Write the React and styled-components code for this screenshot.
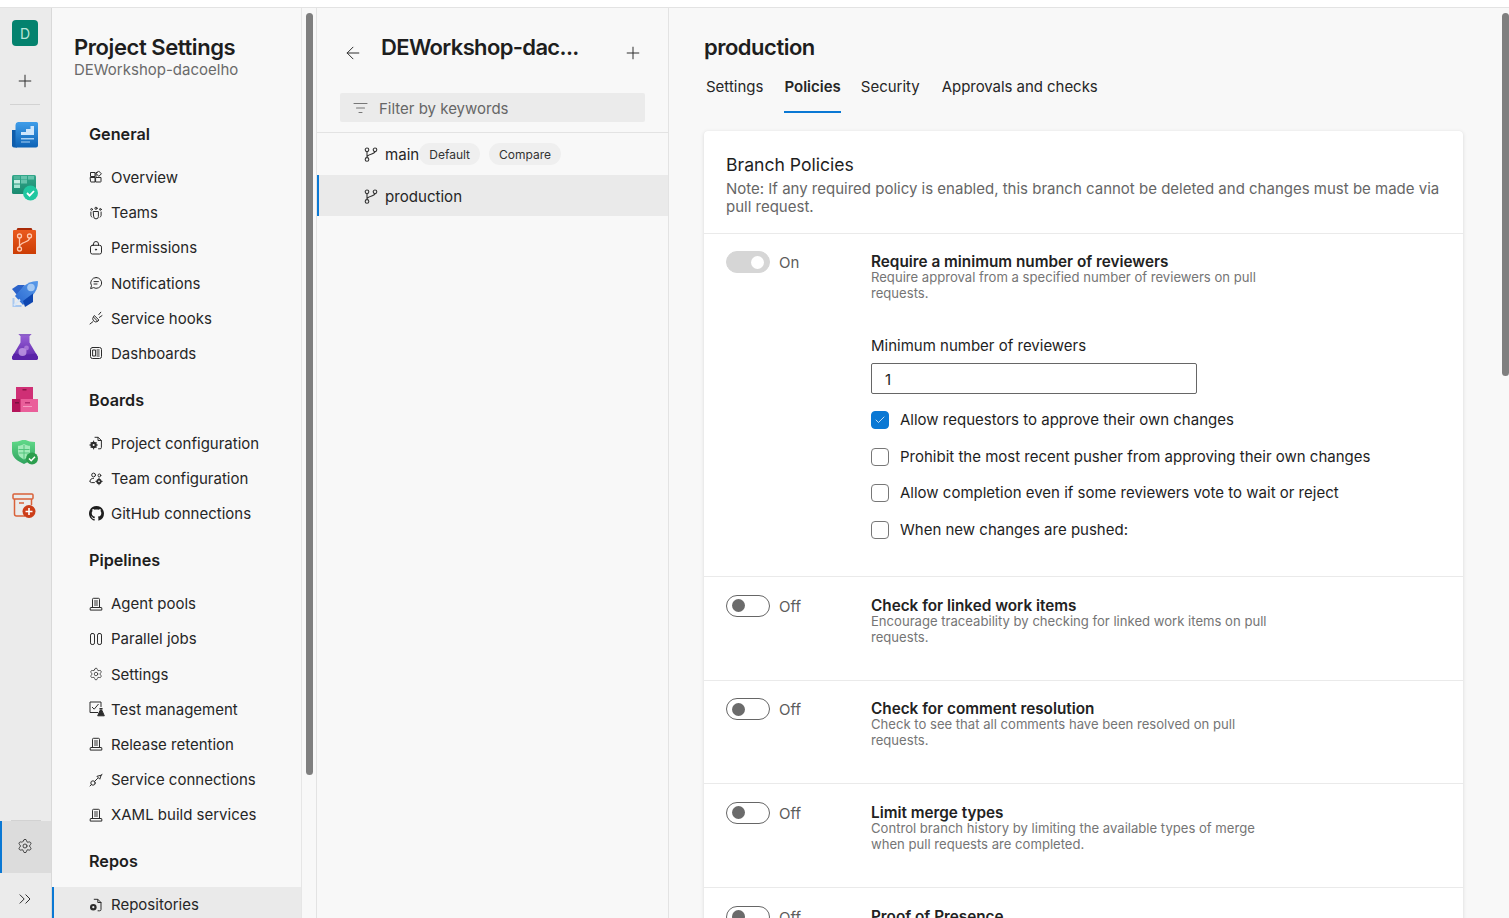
import React from "react";
import styled, { createGlobalStyle } from "styled-components";
import { Settings as Gear, Plus, ArrowLeft, ChevronsRight, Check } from "lucide-react";

const Global = createGlobalStyle`
  html, body { margin: 0; padding: 0; height: 100%; overflow: hidden; background: #fff; }
  body { font-family: Inter, "Noto Sans", "Liberation Sans", sans-serif; color: #1e1e1e; }
  * { box-sizing: border-box; }
`;

const Page = styled.div`display: flex; flex-direction: column; height: 918px; overflow: hidden;`;
const TopStrip = styled.div`height: 8px; flex: none; background: #fff; border-bottom: 1px solid #e3e3e3;`;
const Body = styled.div`display: flex; flex: 1; min-height: 0; background: #f8f8f8;`;

const Rail = styled.nav`
  width: 52px; flex: none; background: #ebebeb; border-right: 1px solid #d9d9d9;
  display: flex; flex-direction: column; align-items: center; padding: 12px 1px 0 0;
`;
const ProjectBadge = styled.div`
  width: 26px; height: 26px; border-radius: 4px; background: #04826e; color: #b9e6da;
  display: flex; align-items: center; justify-content: center; font-size: 14px; flex: none;
`;
const RailButton = styled.div`
  height: 24px; flex: none; margin-top: 23px; display: flex; align-items: center; color: #2f2f2f;
`;
const RailDivider = styled.div`width: 30px; height: 1px; background: #d2d2d2; margin-top: 11px; flex: none;`;
const RailList = styled.div`margin-top: 3px; display: flex; flex-direction: column; align-items: center; width: 100%;`;
const RailItem = styled.div`height: 53px; width: 100%; display: flex; align-items: center; justify-content: center;`;
const RailFooter = styled.div`margin: auto -1px 0 0; width: calc(100% + 1px); display: flex; flex-direction: column;`;
const RailSettings = styled.div`
  height: 52px; background: #dcdcdc; border-left: 2px solid #0a78d4;
  display: flex; align-items: center; justify-content: center; padding: 0 3px 2px 0; color: #2f2f2f;
`;
const RailCollapse = styled.div`height: 45px; display: flex; align-items: center; justify-content: center; color: #2f2f2f; padding: 6px 1px 0 0;`;
const FooterLine = styled.div`width: 30px; height: 1px; background: #d2d2d2; margin: 0 auto;`;

const NavWrap = styled.div`position: relative; width: 265px; flex: none; border-right: 1px solid #e3e3e3;`;
const Nav = styled.aside`width: 250px; height: 100%; border-right: 1px solid #e6e6e6; overflow: hidden; padding-top: 25px;`;
const NavHeader = styled.header`padding-left: 22px;`;
const NavTitle = styled.h1`margin: 0; font-size: 22px; line-height: 28px; font-weight: 600; letter-spacing: -0.42px;`;
const NavSub = styled.div`font-size: 15px; line-height: 20px; color: #6a6a6a; margin-top: -1px;`;
const NavBody = styled.div`margin-top: 42px;`;
const NavGroup = styled.h2`
  margin: 0 0 13.9px 37px; font-size: 16.2px; line-height: 24px; font-weight: 600;
`;
const NavGroupBlock = styled.section`margin-bottom: 16.9px;`;
const NavRow = styled.div`
  height: 35.2px; display: flex; align-items: center; font-size: 15px;
  padding-left: ${p => (p.$active ? 35 : 37)}px; color: #262626;
  ${p => p.$active && "background:#eaeaea;border-left:2px solid #0a78d4;"}
`;
const NavIconBox = styled.span`width: 22px; flex: none; display: flex; align-items: center; color: #2c2c2c;`;
const Thumb = styled.div`
  position: absolute; top: ${p => p.$top}px; right: ${p => p.$right}px; width: 7px; height: ${p => p.$h}px;
  background: #7f7f7f; border-radius: 4px;
`;

const Mid = styled.section`width: 352px; flex: none; border-right: 1px solid #e3e3e3; background: #f8f8f8;`;
const MidHeader = styled.header`height: 85px; display: flex; align-items: flex-start; padding: 25px 25px 0 26px; color: #2f2f2f;`;
const BackButton = styled.span`margin-top: 10px; display: flex;`;
const MidTitle = styled.h2`
  margin: 0 0 0 18px; flex: 1; font-size: 22px; line-height: 28px; font-weight: 600; letter-spacing: -0.65px; color: #1e1e1e;
`;
const AddButton = styled.span`margin-top: 10px; display: flex;`;
const FilterBox = styled.div`
  margin: 0 23px; height: 29px; background: #ebebeb; border-radius: 2px; display: flex; align-items: center;
  padding: 1px 0 0 13px; gap: 11px; font-size: 15px; color: #666;
`;
const MidDivider = styled.div`height: 1px; background: #e3e3e3; margin-top: 10px;`;
const BranchRow = styled.div`
  height: ${p => p.$h}px; display: flex; align-items: center; padding-left: ${p => (p.$active ? 45 : 47)}px;
  font-size: 15.1px; color: #262626;
  ${p => p.$active && "background:#eaeaea;border-left:2px solid #0a78d4;padding-top:1px;"}
`;
const BranchName = styled.span`margin-left: 7px;`;
const Pill = styled.span`
  height: 22px; padding: 0 10px; border-radius: 11px; background: #efefef; font-size: 12px;
  display: inline-flex; align-items: center; margin-left: ${p => p.$gap}px; color: #333;
`;

const Main = styled.main`position: relative; flex: 1; min-width: 0; padding: 25px 0 0 35px; overflow: hidden;`;
const MainTitle = styled.h2`margin: 0; font-size: 22px; line-height: 28px; font-weight: 600; letter-spacing: -0.5px;`;
const Tabs = styled.div`display: flex; margin: 9px 0 18px 2px; gap: 20px; height: 43px;`;
const Tab = styled.div`
  font-size: 15px; line-height: 20px; padding-top: 7px; height: 43px; color: #262626;
  margin-left: ${p => p.$ml || 0}px; letter-spacing: ${p => p.$ls || 0}px;
  ${p => p.$active && "font-weight:600;border-bottom:2px solid #0a78d4;"}
`;
const Card = styled.div`
  width: 759px; background: #fff; border-radius: 4px 4px 0 0;
  box-shadow: 0 1px 4px rgba(0,0,0,.12), 0 0 1px rgba(0,0,0,.06);
`;
const CardHeader = styled.div`padding: 22px 22px 17px; border-bottom: 1px solid #eaeaea;`;
const CardTitle = styled.h3`margin: 0; font-size: 17.6px; line-height: 24px; font-weight: 400;`;
const CardNote = styled.p`margin: 3px 0 0; font-size: 15px; line-height: 18px; color: #666;`;
const Policy = styled.div`
  display: grid; grid-template-columns: 145px 1fr; padding: ${p => p.$pt}px 22px ${p => p.$pb}px;
  border-bottom: 1px solid #eaeaea;
`;
const ToggleCell = styled.div`display: flex; align-items: flex-start; gap: 9px; font-size: 15px; color: #5c5c5c; line-height: 22px;`;
const ToggleLabel = styled.span`padding-top: 1px;`;
const ToggleTrack = styled.span`
  width: 44px; height: 22px; border-radius: 11px; flex: none; display: flex; align-items: center; padding: 0 5px;
  justify-content: ${p => (p.$on ? "flex-end" : "flex-start")};
  background: ${p => (p.$on ? "#d6d6d6" : "#fff")};
  border: 1px solid ${p => (p.$on ? "#d6d6d6" : "#666")};
`;
const ToggleKnob = styled.span`width: 13px; height: 13px; border-radius: 50%; background: ${p => (p.$on ? "#fff" : "#6b6b6b")};`;
const PolicyTitle = styled.div`font-size: 15.3px; line-height: 20px; font-weight: 600; color: #222; padding-top: 1px;`;
const PolicyDesc = styled.div`font-size: 13.1px; line-height: 16px; color: #757575; width: 400px; margin-top: -3px;`;
const FieldLabel = styled.div`margin-top: 35px; font-size: 15px; line-height: 20px;`;
const NumberBox = styled.div`
  margin-top: 7px; width: 326px; height: 31px; border: 1px solid #666; border-radius: 2px;
  font-size: 15px; display: flex; align-items: center; padding: 1px 0 0 13px;
`;
const Checks = styled.div`margin-top: 17px; display: flex; flex-direction: column; gap: 18.6px;`;
const CheckRow = styled.div`display: flex; align-items: center; gap: 11px; font-size: 15px; height: 18px;`;
const CheckLabel = styled.span`margin-top: -1px;`;
const CheckBox = styled.span`
  width: 18px; height: 18px; border-radius: 4px; flex: none; display: flex; align-items: center; justify-content: center;
  border: 1px solid ${p => (p.$on ? "#0a78d4" : "#777")}; background: ${p => (p.$on ? "#0a78d4" : "#fff")}; color: #fff;
`;

const S = { fill: "none", stroke: "currentColor", strokeWidth: 1, strokeLinecap: "round", strokeLinejoin: "round" };
const I = ({ children, w = 14, h = 14 }) => <svg width={w} height={h} viewBox={`0 0 ${w} ${h}`} {...S}>{children}</svg>;

const icons = {
  overview: <I><path d="M2 2.5h4v4H1.5v-3.5a.5.5 0 0 1 .5-.5zM1.5 7.5H6v4.5H2a.5.5 0 0 1-.5-.5zM7 7.5h5v4a.5.5 0 0 1-.5.5H7zM7 6.5V2.5h1.2M9.8 1.2l2.6 2.6-2.6 2.6-2.4-2.6z" /></I>,
  teams: <I><circle cx="7" cy="2.3" r="1.1"/><circle cx="2.6" cy="3.4" r=".9"/><circle cx="11.4" cy="3.4" r=".9"/><path d="M4.6 5.500h4.800v5a2.400 2.400 0 0 1-4.800 0zM1.900 6v3.600a2 2 0 0 0 1 1.500M12.100 6v3.600a2 2 0 0 1-1 1.500"/></I>,
  lock: <I><rect x="1.500" y="4.300" width="11" height="8.700" rx="1.800"/><path d="M4.500 4.300V3a2.500 2.500 0 0 1 5 0v1.300"/><circle cx="7" cy="8.600" r=".6" fill="currentColor"/></I>,
  chat: <I><path d="M7.200 1.500a5.400 5.400 0 1 1-2.600 10.100L1.600 12.600l.9-2.900A5.400 5.400 0 0 1 7.200 1.500zM5 5.600h4.400M5 8h3"/></I>,
  hook: <I><path d="M1 13l3-2.400M11.800 1.200L9.800 3.600M4.600 6.200l4 4M5.600 4.800l4.400 4.400-1.600 1.200a2.400 2.400 0 0 1-3.200-.2l-1-1a2.400 2.400 0 0 1 0-3zM13 4.600l-2.600 1.800"/></I>,
  dash: <I><rect x="1.500" y="1.500" width="11" height="11" rx="2"/><path d="M4 4h2.600v6H4zM8 4h2.200M8 6h2.200M8 8h2.200M8 10h2.200"/></I>,
  projcfg: <I><path d="M6 1.300h3.200L12.400 4.500v7a1.300 1.300 0 0 1-1.300 1.300H9.500M9 1.500v3h3.200"/><circle cx="4.600" cy="9" r="3.200" fill="currentColor" stroke="none"/><path d="M4.600 5v1M4.600 12v1M.8 9h1M7.400 9h1M2 6.400l.7.7M6.500 10.900l.7.7M2 11.600l.7-.7M6.500 7.100l.7-.7"/><circle cx="4.600" cy="9" r="1" fill="#f8f8f8" stroke="none"/></I>,
  teamcfg: <I><circle cx="4.600" cy="3" r="1.900"/><path d="M1 9.300c0-2 1.500-3 3.600-3M1 9.300c0 .8.6 1.300 1.400 1.300h3"/><circle cx="10.400" cy="3.400" r="1.400"/><circle cx="10" cy="9.400" r="2.600" fill="currentColor" stroke="none"/><path d="M10 6v.8M10 12v.8M6.800 9.400h.8M12.400 9.400h.8"/><circle cx="10" cy="9.400" r=".8" fill="#f8f8f8" stroke="none"/></I>,
  github: <svg width="15" height="15" viewBox="0 0 16 16" fill="#1e1e1e"><path d="M8 0C3.58 0 0 3.58 0 8c0 3.54 2.29 6.53 5.47 7.59.4.07.55-.17.55-.38 0-.19-.01-.82-.01-1.490-2.010.37-2.530-.49-2.690-.94-.09-.23-.48-.94-.82-1.130-.28-.15-.68-.52-.01-.53.63-.01 1.080.58 1.230.82.72 1.210 1.870.87 2.330.66.07-.52.28-.87.51-1.070-1.780-.2-3.640-.89-3.640-3.950 0-.87.31-1.590.82-2.150-.08-.2-.36-1.020.08-2.120 0 0 .67-.21 2.200.82.64-.18 1.320-.27 2-.27s1.360.09 2 .27c1.530-1.040 2.200-.82 2.200-.82.44 1.100.16 1.920.08 2.120.51.56.82 1.270.82 2.150 0 3.070-1.870 3.750-3.650 3.950.29.25.54.73.54 1.480 0 1.070-.01 1.930-.01 2.200 0 .21.15.46.55.38A8.010 8.010 0 0 0 16 8c0-4.420-3.580-8-8-8z"/></svg>,
  agent: <I><path d="M3.500 10.500V2.300a1 1 0 0 1 1-1h5a1 1 0 0 1 1 1v8.200M1.200 12.700V11a.5.5 0 0 1 .5-.5h10.600a.5.5 0 0 1 .5.5v1.700zM5.500 4h3M5.500 6h3M5.500 8h3"/></I>,
  parallel: <I><rect x="1.500" y="1.500" width="4" height="11" rx="1.600"/><rect x="8.500" y="1.500" width="4" height="11" rx="1.600"/></I>,
  gear: <Gear size={14} strokeWidth={1.3} />,
  test: <svg width="16" height="16" viewBox="0 0 16 16" fill="none" stroke="currentColor" strokeWidth="1"><path d="M9 11.500H1V1h11v5"/><path d="M3 6l2.200 2.200L9.500 3"/><path d="M10.500 7.500h3M11.200 7.500v2M12.800 7.500v2" /><path d="M11 9.500h2l2.300 5.300H8.700z" fill="currentColor"/></svg>,
  conn: <I><circle cx="4" cy="10" r="2.200"/><path d="M1 13l1.500-1.500M5.600 8.400l3-3M8.200 3.600l2.600 2.600 1.200-3.600zM13 1.200l-1 1.400"/></I>,
  repo: <I><path d="M5.200 1.300h3.600L12 4.500v7a1.300 1.300 0 0 1-1.300 1.300H9M8.800 1.500v3h3.100"/><circle cx="4.300" cy="9.200" r="3.300" fill="currentColor" stroke="none"/><circle cx="4.300" cy="9.200" r="1.100" fill="#eaeaea" stroke="none"/></I>,
};

const BranchIcon = () => (
  <svg width="14" height="15" viewBox="0 0 14 15" fill="none" stroke="#333" strokeWidth="1.100">
    <circle cx="3" cy="2.800" r="1.800"/><circle cx="11" cy="2.800" r="1.800"/><circle cx="3" cy="12.400" r="1.800"/>
    <path d="M3 4.600v6M11 4.600c0 3-8 2.400-8 5.600"/>
  </svg>
);
const FilterIcon = () => (
  <svg width="15" height="13" viewBox="0 0 15 13" fill="none" stroke="#777" strokeWidth="1.100" strokeLinecap="round">
    <path d="M1 1.500h13M3.500 6h8M6 10.500h3"/>
  </svg>
);

const RailIcon = ({ children, dy = 0 }) => <svg width="26" height="26" viewBox={`0 ${dy} 26 26`}>{children}</svg>;
const OverviewIcon = () => (
  <RailIcon><defs><linearGradient id="ov" x1="0" y1="0" x2="0" y2="1"><stop offset="0" stopColor="#3f9de9"/><stop offset="1" stopColor="#0d62b5"/></linearGradient></defs>
    <path d="M0 8h5v17.500H2a2 2 0 0 1-2-2z" fill="#0f5dab"/>
    <path d="M6 0h18.500a1.500 1.500 0 0 1 1.500 1.500v22a2 2 0 0 1-2 2H3.500V3A3 3 0 0 1 6 0z" fill="url(#ov)"/>
    <path d="M9 13V10h5V7h4.500V4H22v9z" fill="#cfe6fb"/><path d="M9 16h13v1.500H9zM9 19.500h9v1H9z" fill="#a8d0f3"/></RailIcon>
);
const BoardsIcon = () => (
  <RailIcon><defs><linearGradient id="bo" x1="0" y1="0" x2="0" y2="1"><stop offset="0" stopColor="#33a78a"/><stop offset="1" stopColor="#1a8a70"/></linearGradient></defs>
    <rect y="0" width="24" height="19" rx="1.500" fill="url(#bo)"/>
    <g fill="#66c3ac"><rect x="2" y="1" width="6" height="3.500" fill="#4fb59b"/><rect x="9" y="1" width="6" height="3.500"/><rect x="16" y="1" width="6" height="3.500"/><rect x="9" y="5" width="6" height="3.500"/></g>
    <rect x="2" y="5" width="6" height="3.500" fill="#c9eee4"/><rect x="2" y="9.500" width="6" height="3.500" fill="#a7e3d3"/>
    <circle cx="18.500" cy="18" r="7.500" fill="#20c7a0"/><path d="M15 18l2.600 2.600 4.400-4.600" stroke="#fff" strokeWidth="1.800" fill="none"/></RailIcon>
);
const ReposIcon = () => (
  <RailIcon><defs><linearGradient id="re" x1="0" y1="0" x2="0" y2="1"><stop offset="0" stopColor="#ea5a1e"/><stop offset="1" stopColor="#cc3d05"/></linearGradient></defs>
    <path d="M4 3l1.500-3h14l1.500 3z" fill="#a92a07"/><path d="M2 2h21a1 1 0 0 1 1 1v23H1V3a1 1 0 0 1 1-1z" fill="url(#re)"/>
    <g fill="none" stroke="#ffc9af" strokeWidth="1.300"><circle cx="7.500" cy="8" r="2"/><circle cx="17.500" cy="8" r="2"/><circle cx="7.500" cy="21" r="2"/><path d="M7.500 10v9M17.500 10c0 5-10 3.500-10 9"/></g></RailIcon>
);
const PipesIcon = () => (
  <RailIcon><defs><linearGradient id="pi" x1="0" y1="1" x2="1" y2="0"><stop offset="0" stopColor="#2866d0"/><stop offset="1" stopColor="#5a9cea"/></linearGradient></defs>
    <path d="M0 8L6 4H13L5 14z" fill="#2b62c9"/>
    <path d="M11 6C15 2 20 0 25 0c.7 0 1 .3 1 1 0 5-2 10-6 14L11 24 3 15z" fill="url(#pi)"/>
    <path d="M21 12.500V21L13 26 11 20z" fill="#0f46b0"/>
    <circle cx="19" cy="6.500" r="3.800" fill="#a3c8f3"/>
    <path d="M1.500 17V25H9.500" fill="none" stroke="#a8c8f0" strokeWidth="2"/><path d="M2 24.500L8 18.500" stroke="#d8e7f9" strokeWidth="2"/></RailIcon>
);
const TestIcon = () => (
  <RailIcon><defs><linearGradient id="te" x1="0" y1="0" x2="0" y2="1"><stop offset="0" stopColor="#9a62d8"/><stop offset="1" stopColor="#5a23a8"/></linearGradient></defs>
    <path d="M6.500 0h13l-2 2v6.500L26 23a2.500 2.500 0 0 1-2 3H2A2.500 2.500 0 0 1 0 23l8.500-14.500V2z" fill="url(#te)"/>
    <path d="M6.500 0h13l-2 2h-9z" fill="#8c5fc7"/>
    <path d="M0 23l2-3.500c7 1.500 15 1.500 22 0l2 3.500a2.500 2.500 0 0 1-2 3H2A2.500 2.500 0 0 1 0 23z" fill="#5a23a8"/>
    <circle cx="10.500" cy="18" r="4" fill="#c9a6ea" opacity=".75"/><circle cx="14.500" cy="14" r="2.400" fill="#b98ae0" opacity=".7"/></RailIcon>
);
const ArtifactsIcon = () => (
  <RailIcon dy={1}>
    <rect x="4" y="0" width="17" height="14" fill="#c8266b"/><rect x="4" y="0" width="17" height="13" rx="1" fill="#cf2f75"/><rect x="10.500" y="3" width="4" height="1.500" fill="#8e1547"/>
    <rect x="0" y="13" width="9" height="13" fill="#b5155a"/><rect x="3" y="16" width="4" height="1.500" fill="#7c0f3e"/>
    <rect x="8.500" y="13" width="17.500" height="13" fill="#ea5f9a"/><rect x="13" y="16" width="5" height="1.500" fill="#b42d6c"/><rect x="11" y="20" width="9" height="1" fill="#f59cc2"/></RailIcon>
);
const ShieldIcon = () => (
  <RailIcon dy={1}><defs><linearGradient id="sh" x1="0" y1="0" x2="0" y2="1"><stop offset="0" stopColor="#63dc8b"/><stop offset="1" stopColor="#2fa35e"/></linearGradient></defs>
    <path d="M12 0c3 2 6 3 11 3v9c0 6-4 10-11 13C5 22 0 18 0 12V3c5 0 9-1 12-3z" fill="url(#sh)"/>
    <path d="M12 5c2 1.200 4 1.800 6 1.800V13c0 3.500-2.500 5.800-6 7.500-3.500-1.700-6-4-6-7.500V6.800C8 6.800 10 6.200 12 5z" fill="#a2eab9"/>
    <path d="M6.500 10.500h11M6.500 14h11M12 6v14" stroke="#52c47c" strokeWidth="1"/>
    <circle cx="20" cy="19.500" r="6" fill="#2c9e4e"/><path d="M17 19.500l2.200 2.200 3.800-4" stroke="#fff" strokeWidth="1.500" fill="none"/></RailIcon>
);
const BoxPlusIcon = () => (
  <RailIcon>
    <g fill="none" stroke="#d9623a" strokeWidth="1.500"><rect x="1" y="1" width="20" height="5" rx="1"/><path d="M2.500 6v15a2 2 0 0 0 2 2H13M19.500 6v6M7 10h5"/></g>
    <circle cx="17" cy="18.500" r="6.500" fill="#cc3d18"/><path d="M17 15v7M13.500 18.500h7" stroke="#fff" strokeWidth="1.600"/></RailIcon>
);

const navData = [
  ["General", [["overview","Overview"],["teams","Teams"],["lock","Permissions"],["chat","Notifications"],["hook","Service hooks"],["dash","Dashboards"]]],
  ["Boards", [["projcfg","Project configuration"],["teamcfg","Team configuration"],["github","GitHub connections"]]],
  ["Pipelines", [["agent","Agent pools"],["parallel","Parallel jobs"],["gear","Settings"],["test","Test management"],["agent","Release retention"],["conn","Service connections"],["agent","XAML build services"]]],
  ["Repos", [["repo","Repositories",true]]],
];

const Toggle = ({ on }) => (
  <ToggleCell>
    <ToggleTrack $on={on}><ToggleKnob $on={on} /></ToggleTrack>
    <ToggleLabel>{on ? "On" : "Off"}</ToggleLabel>
  </ToggleCell>
);

const policies = [
  ["Check for linked work items", "Encourage traceability by checking for linked work items on pull requests."],
  ["Check for comment resolution", "Check to see that all comments have been resolved on pull requests."],
  ["Limit merge types", "Control branch history by limiting the available types of merge when pull requests are completed."],
  ["Proof of Presence", "Require proof of presence on pull requests."],
];

const checks = [
  ["Allow requestors to approve their own changes", true],
  ["Prohibit the most recent pusher from approving their own changes", false],
  ["Allow completion even if some reviewers vote to wait or reject", false],
  ["When new changes are pushed:", false],
];

export default function App() {
  return (
    <Page>
      <Global />
      <TopStrip />
      <Body>
        <Rail>
          <ProjectBadge>D</ProjectBadge>
          <RailButton><Plus size={20} strokeWidth={1.200} /></RailButton>
          <RailDivider />
          <RailList>
            <RailItem><OverviewIcon /></RailItem>
            <RailItem><BoardsIcon /></RailItem>
            <RailItem><ReposIcon /></RailItem>
            <RailItem><PipesIcon /></RailItem>
            <RailItem><TestIcon /></RailItem>
            <RailItem><ArtifactsIcon /></RailItem>
            <RailItem><ShieldIcon /></RailItem>
            <RailItem><BoxPlusIcon /></RailItem>
          </RailList>
          <RailFooter>
            <FooterLine />
            <RailSettings><Gear size={16} strokeWidth={1.300} /></RailSettings>
            <RailCollapse><ChevronsRight size={20} strokeWidth={1.200} /></RailCollapse>
          </RailFooter>
        </Rail>

        <NavWrap>
          <Nav>
            <NavHeader>
              <NavTitle>Project Settings</NavTitle>
              <NavSub>DEWorkshop-dacoelho</NavSub>
            </NavHeader>
            <NavBody>
              {navData.map(([title, rows]) => (
                <NavGroupBlock key={title}>
                  <NavGroup>{title}</NavGroup>
                  {rows.map(([icon, label, active]) => (
                    <NavRow key={label} $active={active}>
                      <NavIconBox>{icons[icon]}</NavIconBox>
                      {label}
                    </NavRow>
                  ))}
                </NavGroupBlock>
              ))}
            </NavBody>
          </Nav>
          <Thumb $top={5} $right={3} $h={762} />
        </NavWrap>

        <Mid>
          <MidHeader>
            <BackButton><ArrowLeft size={20} strokeWidth={1.200} /></BackButton>
            <MidTitle>DEWorkshop-dac...</MidTitle>
            <AddButton><Plus size={20} strokeWidth={1.200} /></AddButton>
          </MidHeader>
          <FilterBox><FilterIcon />Filter by keywords</FilterBox>
          <MidDivider />
          <BranchRow $h={42}>
            <BranchIcon /><BranchName>main</BranchName>
            <Pill $gap={0}>Default</Pill>
            <Pill $gap={9}>Compare</Pill>
          </BranchRow>
          <BranchRow $h={41} $active>
            <BranchIcon /><BranchName>production</BranchName>
          </BranchRow>
        </Mid>

        <Main>
          <MainTitle>production</MainTitle>
          <Tabs>
            <Tab>Settings</Tab>
            <Tab $active $ml={1}>Policies</Tab>
            <Tab>Security</Tab>
            <Tab $ml={2} $ls={-0.05}>Approvals and checks</Tab>
          </Tabs>
          <Card>
            <CardHeader>
              <CardTitle>Branch Policies</CardTitle>
              <CardNote>Note: If any required policy is enabled, this branch cannot be deleted and changes must be made via pull request.</CardNote>
            </CardHeader>
            <Policy $pt={17} $pb={37.300}>
              <Toggle on />
              <div>
                <PolicyTitle>Require a minimum number of reviewers</PolicyTitle>
                <PolicyDesc>Require approval from a specified number of reviewers on pull requests.</PolicyDesc>
                <FieldLabel>Minimum number of reviewers</FieldLabel>
                <NumberBox>1</NumberBox>
                <Checks>
                  {checks.map(([label, on]) => (
                    <CheckRow key={label}>
                      <CheckBox $on={on}>{on && <Check size={12} strokeWidth={1.500} />}</CheckBox>
                      <CheckLabel>{label}</CheckLabel>
                    </CheckRow>
                  ))}
                </Checks>
              </div>
            </Policy>
            {policies.map(([title, desc]) => (
              <Policy key={title} $pt={17.500} $pb={35.200}>
                <Toggle />
                <div>
                  <PolicyTitle>{title}</PolicyTitle>
                  <PolicyDesc>{desc}</PolicyDesc>
                </div>
              </Policy>
            ))}
          </Card>
          <Thumb $top={5} $right={0} $h={363} />
        </Main>
      </Body>
    </Page>
  );
}
